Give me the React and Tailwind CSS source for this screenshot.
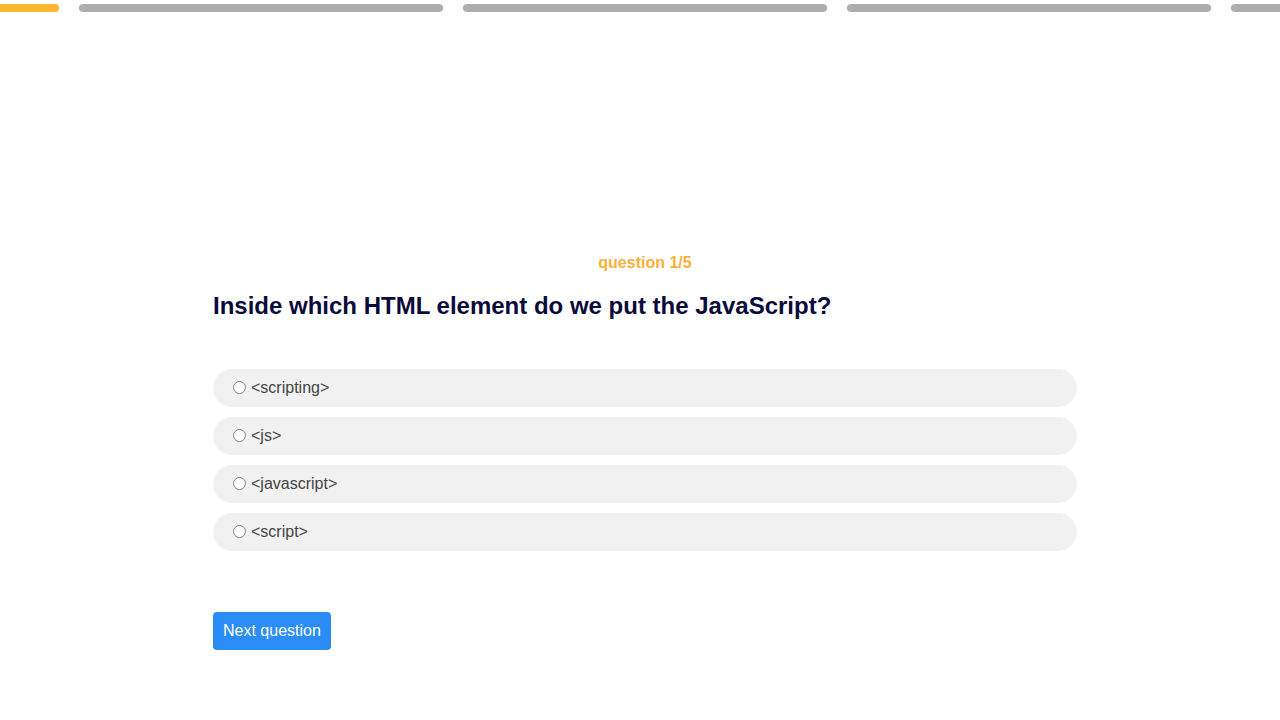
export default function App() {
  const options = ["<scripting>", "<js>", "<javascript>", "<script>"];
  const bars = [true, false, false, false, false];
  return (
    <div className="w-[1280px] h-[720px] bg-white overflow-hidden" style={{ fontFamily: '"Liberation Sans", Arial, sans-serif' }}>
      <div className="flex gap-[20px] pt-[4px] ml-[-305px]">
        {bars.map((a, i) => (
          <div key={i} className={`shrink-0 w-[364px] h-[8px] rounded-full ${a ? "bg-[#fdb72f]" : "bg-[#adadad]"}`} />
        ))}
      </div>
      <div className="ml-[213px] w-[864px] mt-[242px]">
        <div className="text-center text-[16px] font-bold text-[#f9b03a] leading-[18px]">question 1/5</div>
        <h1 className="mt-[20px] text-[24px] font-bold text-[#0b0b3b] leading-[28px]">Inside which HTML element do we put the JavaScript?</h1>
        <div className="mt-[49px] flex flex-col gap-[10px]">
          {options.map((o) => (
            <label key={o} className="flex items-center h-[38px] rounded-full bg-[#f1f1f1] pl-[20px] text-[16px] text-[#444444]">
              <span className="w-[13px] h-[13px] rounded-full border border-[#808080] bg-white mr-[5px] shrink-0 -mt-[2px]" />
              <span className="leading-[18px]">{o}</span>
            </label>
          ))}
        </div>
        <button className="mt-[61px] h-[38px] px-[10px] rounded-[4px] bg-[#2a8cf5] text-white text-[16px]">Next question</button>
      </div>
    </div>
  );
}
